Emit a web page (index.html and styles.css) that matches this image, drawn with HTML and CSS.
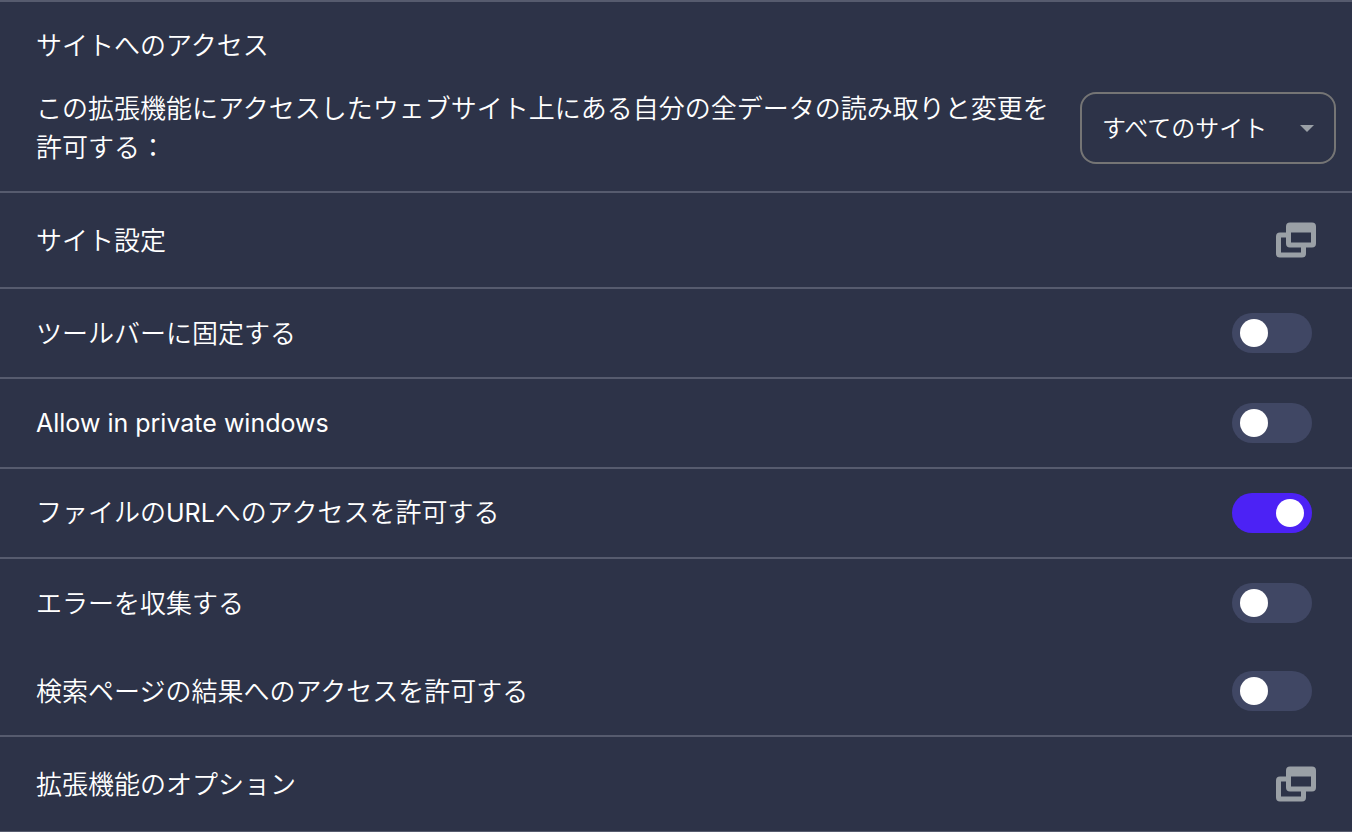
FILE: index.html
```html
<!DOCTYPE html>
<html lang="ja">

<head>
    <meta charset="UTF-8">
    <meta name="viewport" content="width=device-width, initial-scale=1.0">
    <title>拡張機能</title>
    <link rel="stylesheet" href="styles.css">
</head>

<body>
    <main class="settings">
        <section class="access">
            <h2 class="title">サイトへのアクセス</h2>
            <div class="access-row">
                <label class="access-label" for="hostAccess">この拡張機能にアクセスしたウェブサイト上にある自分の全データの読み取りと変更を許可する：</label>
                <div class="select-box">
                    <select id="hostAccess" class="select">
                        <option>すべてのサイト</option>
                    </select>
                    <svg class="arrow" viewBox="0 0 14 7" aria-hidden="true">
                        <path d="M0 0h14L7 7z" />
                    </svg>
                </div>
            </div>
        </section>

        <button type="button" class="row link-row">
            <span>サイト設定</span>
            <svg class="icon" viewBox="0 0 40 36" aria-hidden="true">
                <path fill-rule="evenodd" d="M14 .5h22a4 4 0 0 1 4 4v17a4 4 0 0 1-4 4H14a4 4 0 0 1-4-4v-17a4 4 0 0 1 4-4zM15 10.500v10h20v-10z" />
                <path d="M10 10.500H4a4 4 0 0 0-4 4v17a4 4 0 0 0 4 4h22a4 4 0 0 0 4-4v-7h-5v6H5v-15h5z" />
            </svg>
        </button>

        <div class="row">
            <label for="pin">ツールバーに固定する</label>
            <input type="checkbox" id="pin" class="toggle">
        </div>
        <div class="row">
            <label for="private" class="latin" lang="en">Allow in private windows</label>
            <input type="checkbox" id="private" class="toggle">
        </div>
        <div class="row">
            <label for="fileUrl">ファイルの<span class="latin">URL</span>へのアクセスを許可する</label>
            <input type="checkbox" id="fileUrl" class="toggle" checked>
        </div>
        <div class="row">
            <label for="errors">エラーを収集する</label>
            <input type="checkbox" id="errors" class="toggle">
        </div>
        <div class="row no-line">
            <label for="search">検索ページの結果へのアクセスを許可する</label>
            <input type="checkbox" id="search" class="toggle">
        </div>

        <button type="button" class="row link-row last">
            <span>拡張機能のオプション</span>
            <svg class="icon" viewBox="0 0 40 36" aria-hidden="true">
                <path fill-rule="evenodd" d="M14 .5h22a4 4 0 0 1 4 4v17a4 4 0 0 1-4 4H14a4 4 0 0 1-4-4v-17a4 4 0 0 1 4-4zM15 10.500v10h20v-10z" />
                <path d="M10 10.500H4a4 4 0 0 0-4 4v17a4 4 0 0 0 4 4h22a4 4 0 0 0 4-4v-7h-5v6H5v-15h5z" />
            </svg>
        </button>
    </main>
</body>

</html>
```

FILE: styles.css
```css
* {
    box-sizing: border-box;
    margin: 0;
    padding: 0;
}

body {
    background: #2d3348;
    color: #fff;
    font-family: Inter, "Noto Sans CJK JP", sans-serif;
    font-size: 26px;
    font-weight: 350;
    line-height: 39px;
}

.latin {
    font-size: 25px;
    font-weight: 400;
}

.access {
    padding: 24px 16px 24px 36px;
    border-top: 2px solid #565b6e;
}

.title {
    margin-bottom: 24px;
    font-size: 26px;
    font-weight: 350;
}

.access-row {
    display: flex;
    align-items: center;
    gap: 24px;
}

.access-label {
    flex: 1;
}

.select-box {
    position: relative;
}

.select {
    display: block;
    width: 256px;
    height: 72px;
    padding: 0 48px 0 20px;
    appearance: none;
    background: transparent;
    border: 2px solid #757575;
    border-radius: 16px;
    color: #fff;
    font-family: inherit;
    font-size: 24px;
    font-weight: 350;
}

.select option {
    background: #2d3348;
}

.arrow {
    position: absolute;
    top: 33px;
    right: 22px;
    width: 14px;
    height: 7px;
    fill: #9aa0a6;
    pointer-events: none;
}

.row {
    display: flex;
    align-items: center;
    justify-content: space-between;
    width: 100%;
    min-height: 90px;
    padding: 0 40px 0 36px;
    border-top: 2px solid #565b6e;
}

.no-line {
    min-height: 88px;
    border-top: none;
}

.link-row {
    min-height: 96px;
    padding-right: 36px;
    background: none;
    border: none;
    border-top: 2px solid #565b6e;
    color: inherit;
    font: inherit;
    text-align: left;
    cursor: pointer;
}

.last {
    min-height: 97px;
    border-bottom: 1px solid #565b6e;
}

.icon {
    width: 40px;
    height: 36px;
    fill: #9aa0a6;
}

.toggle {
    display: flex;
    align-items: center;
    width: 80px;
    height: 40px;
    padding: 0 8px;
    appearance: none;
    background: #404764;
    border-radius: 20px;
    cursor: pointer;
}

.toggle::before {
    content: "";
    width: 28px;
    height: 28px;
    background: #fff;
    border-radius: 50%;
}

.toggle:checked {
    justify-content: flex-end;
    background: #4c22f5;
}
```
